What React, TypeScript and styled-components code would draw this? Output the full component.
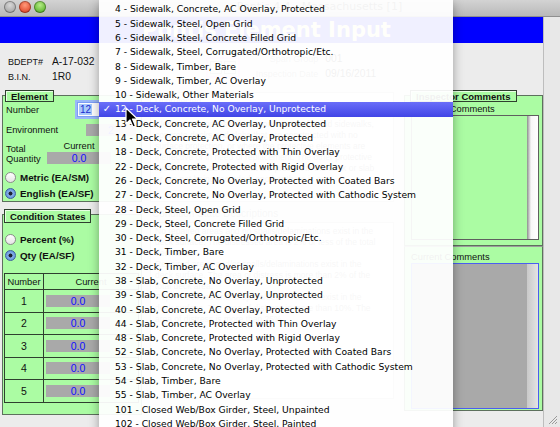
import { Fragment } from "react";
import styled, { createGlobalStyle } from "styled-components";

const GlobalStyle = createGlobalStyle`
  html, body {
    margin: 0;
    width: 560px;
    height: 427px;
    overflow: hidden;
    background: #ececec;
    font-family: "Liberation Sans", Arial, sans-serif;
  }
`;

const Window = styled.div`
  position: relative;
  width: 560px;
  height: 427px;
  overflow: hidden;
  display: flex;
  flex-direction: column;
  font-size: 9.3px;
  color: #111;
`;

const TitleBar = styled.div`
  height: 17px;
  flex: none;
  display: flex;
  align-items: flex-start;
  padding: 1px 0 0 4px;
  box-sizing: border-box;
  gap: 3px;
  background: linear-gradient(#d3d3d3, #b9b9b9);
  border-bottom: 1px solid #8f8f8f;
`;

const Light = styled.span<{ $c1: string; $c2: string }>`
  width: 12px;
  height: 12px;
  border-radius: 50%;
  background: radial-gradient(circle at 50% 35%, ${(p) => p.$c1}, ${(p) => p.$c2} 75%);
  box-shadow: inset 0 0 0 1px rgba(0, 0, 0, 0.3);
`;

const WinTitle = styled.div`
  flex: 1;
  text-align: center;
  font-family: "DejaVu Sans", sans-serif;
  font-size: 11px;
  color: #333;
  padding-left: 30px;
  line-height: 12px;
`;

const Body = styled.div`
  flex: 1;
  display: flex;
  min-height: 0;
`;

const Main = styled.div`
  width: 543px;
  display: flex;
  flex-direction: column;
`;

const Banner = styled.div`
  height: 26px;
  background: #0000ff;
  color: #ffffb8;
  font-family: "DejaVu Sans", sans-serif;
  font-size: 21px;
  font-weight: bold;
  display: flex;
  align-items: center;
  justify-content: center;
  padding-right: 10px;
`;

const InfoRow = styled.div`
  height: 46px;
  display: flex;
  align-items: flex-start;
`;

const InfoGrid = styled.div<{ $cols: string; $top: number; $left: number }>`
  display: grid;
  grid-template-columns: ${(p) => p.$cols};
  grid-auto-rows: 15px;
  column-gap: 7px;
  align-items: center;
  padding-top: ${(p) => p.$top}px;
  margin-left: ${(p) => p.$left}px;
  font-size: 9px;
`;

const InfoLabel = styled.span<{ $right?: boolean }>`
  text-align: ${(p) => (p.$right ? "right" : "left")};
  color: ${(p) => (p.$right ? "#777" : "#111")};
`;

const InfoValue = styled.span`
  font-size: 10.3px;
`;

const Toolbar = styled.div`
  margin: 14px 0 0 112px;
  width: 34px;
  height: 21px;
  border: 2px solid #f2a8f2;
  display: flex;
  gap: 2px;
  padding: 2px;
  box-sizing: border-box;
`;

const ToolIcon = styled.div`
  flex: 1;
  border: 1px solid #999;
  background: #eee;
`;

const Columns = styled.div`
  flex: 1;
  display: flex;
  padding: 0 0 16px 2px;
  gap: 4px;
  min-height: 0;
`;

const Column = styled.div<{ $w?: number }>`
  width: ${(p) => (p.$w ? `${p.$w}px` : "auto")};
  flex: ${(p) => (p.$w ? "none" : 1)};
  display: flex;
  flex-direction: column;
`;

const Panel = styled.div<{ $top: number; $grow?: boolean }>`
  margin-top: ${(p) => p.$top}px;
  background: #abfca3;
  border: 1px solid #5d705d;
  display: flex;
  flex-direction: column;
  flex: ${(p) => (p.$grow ? 1 : "none")};
`;

const Tab = styled.div<{ $h: number; $left: number }>`
  align-self: flex-start;
  margin: -6px 0 0 ${(p) => p.$left}px;
  height: ${(p) => p.$h}px;
  box-sizing: border-box;
  padding: 0 5px;
  background: #abfca3;
  border: 1px solid #2f3f2f;
  box-shadow: 1px 1px 0 #e8ffe4 inset;
  font-weight: bold;
  font-size: 9.5px;
  display: flex;
  align-items: center;
`;

const FieldRow = styled.div<{ $h: number; $mt?: number }>`
  height: ${(p) => p.$h}px;
  margin-top: ${(p) => p.$mt ?? 0}px;
  display: flex;
  align-items: center;
  padding-left: 3px;
`;

const FieldLabel = styled.span<{ $w: number }>`
  width: ${(p) => p.$w}px;
  flex: none;
`;

const NumberInput = styled.div`
  width: 46px;
  height: 13px;
  border: 1px solid #7d9df5;
  box-shadow: 0 0 0 2px #9ab8f8;
  background: #fff;
  display: flex;
  align-items: center;
  padding-left: 1px;
  font-size: 10px;
`;

const Selected = styled.span`
  background: #a9c8fb;
  color: #1a2cd0;
  padding: 0 1px;
`;

const GrayBox = styled.div<{ $w: number; $h: number }>`
  width: ${(p) => p.$w}px;
  height: ${(p) => p.$h}px;
  background: #a9a9a9;
  color: #1010ff;
  font-size: 10.5px;
  display: flex;
  align-items: center;
  justify-content: center;
`;

const QtyRow = styled.div`
  margin-top: 5px;
  display: grid;
  grid-template-columns: 41px 64px;
  padding-left: 3px;
`;

const QtyLabel = styled.div`
  padding-top: 3px;
  line-height: 10px;
`;

const QtyValue = styled.div`
  display: flex;
  flex-direction: column;
  align-items: center;
  gap: 1px;
  line-height: 10px;
`;

const RadioRow = styled.label<{ $mt?: number }>`
  height: 16px;
  margin-top: ${(p) => p.$mt ?? 0}px;
  display: flex;
  align-items: center;
  gap: 4px;
  padding-left: 2px;
  font-weight: bold;
  font-size: 9.8px;
`;

const Radio = styled.span<{ $on?: boolean }>`
  width: 11px;
  height: 11px;
  border-radius: 50%;
  box-sizing: border-box;
  border: 1px solid ${(p) => (p.$on ? "#3e5f9e" : "#8a8a8a")};
  background: ${(p) =>
    p.$on
      ? "radial-gradient(circle, #1b2233 0 1.7px, #86aee8 2.3px, #4f86d8 100%)"
      : "linear-gradient(#ffffff, #e4e4e4)"};
`;

const Table = styled.div`
  margin: 10px 2px 11px 1px;
  border: 1px solid #2f3f2f;
  display: grid;
  grid-template-columns: 39px 1fr;
`;

const Cell = styled.div<{ $h: number; $last?: boolean }>`
  height: ${(p) => p.$h}px;
  border-bottom: ${(p) => (p.$last ? "none" : "1px solid #2f3f2f")};
  display: flex;
  align-items: center;
  justify-content: center;
  font-size: 9.3px;
  &:nth-child(odd) {
    border-right: 1px solid #2f3f2f;
  }
`;

const RowNumber = styled(Cell)`
  font-size: 10.5px;
`;

const CurrentCell = styled(Cell)`
  justify-content: flex-start;
  padding-left: 2px;
`;

const CenterBox = styled.div<{ $h: number; $mt: number }>`
  margin: ${(p) => p.$mt}px 6px 0 4px;
  height: ${(p) => p.$h}px;
  border: 1px solid #bbb;
  background: #f8f8f8;
  font-size: 8.5px;
  color: #777;
  padding: 3px 12px 0 4px;
  line-height: 11px;
  overflow: hidden;
`;

const CenterLabel = styled.div`
  margin: 6px 0 0 6px;
  font-size: 10px;
  color: #777;
`;

const CommentLabel = styled.div`
  height: 13px;
  padding-left: 6px;
  display: flex;
  align-items: center;
  font-size: 9.3px;
`;

const CommentBox = styled.div<{ $h: number; $focus?: boolean }>`
  height: ${(p) => p.$h}px;
  margin: 0 3px 0 6px;
  box-sizing: border-box;
  border: 1px solid ${(p) => (p.$focus ? "#4a5ef0" : "#5f5f5f")};
  background: ${(p) =>
    p.$focus
      ? "linear-gradient(to right, #a9a9a9 0 calc(100% - 11px), #c9c9c9 calc(100% - 11px), #e4e4e4 100%)"
      : "linear-gradient(to right, #abfca3 0 calc(100% - 11px), #8e8e8e calc(100% - 11px), #f7f7f7 calc(100% - 7px), #ffffff 100%)"};
`;

const CurrentSection = styled.div`
  flex: 1;
  background: #abfca3;
  border: 1px solid #5d705d;
  border-top-color: #9c9c9c;
  display: flex;
  flex-direction: column;
  padding-top: 3px;
`;

const RightStrip = styled.div`
  flex: 1;
  background: #e8e8e8;
  border-left: 1px solid #bdbdbd;
  display: flex;
  align-items: flex-end;
  justify-content: flex-end;
  padding: 0 2px 2px 0;
`;

const Menu = styled.div`
  position: absolute;
  left: 99px;
  top: 0;
  width: 354px;
  height: 440px;
  padding-top: 2.35px;
  box-sizing: border-box;
  background: rgba(255, 255, 255, 0.94);
  box-shadow: 0 3px 10px rgba(0, 0, 0, 0.35);
  font-family: "DejaVu Sans", sans-serif;
  font-size: 9.2px;
`;

const MenuItem = styled.div<{ $active?: boolean }>`
  height: 14.3px;
  line-height: 14.3px;
  display: flex;
  white-space: nowrap;
  color: ${(p) => (p.$active ? "#fff" : "#000")};
  background: ${(p) => (p.$active ? "linear-gradient(#6a6ef9, #4145e6)" : "transparent")};
`;

const Check = styled.span`
  width: 16px;
  flex: none;
  text-align: center;
  font-size: 10px;
`;

const Cursor = styled.svg`
  position: absolute;
  left: 125px;
  top: 107px;
`;

const items = [
  "4 - Sidewalk, Concrete, AC Overlay, Protected",
  "5 - Sidewalk, Steel, Open Grid",
  "6 - Sidewalk, Steel, Concrete Filled Grid",
  "7 - Sidewalk, Steel, Corrugated/Orthotropic/Etc.",
  "8 - Sidewalk, Timber, Bare",
  "9 - Sidewalk, Timber, AC Overlay",
  "10 - Sidewalk, Other Materials",
  "12 - Deck, Concrete, No Overlay, Unprotected",
  "13 - Deck, Concrete, AC Overlay, Unprotected",
  "14 - Deck, Concrete, AC Overlay, Protected",
  "18 - Deck, Concrete, Protected with Thin  Overlay",
  "22 - Deck, Concrete, Protected with Rigid Overlay",
  "26 - Deck, Concrete, No Overlay, Protected with Coated Bars",
  "27 - Deck, Concrete, No Overlay, Protected with Cathodic System",
  "28 - Deck, Steel, Open Grid",
  "29 - Deck, Steel, Concrete Filled Grid",
  "30 - Deck, Steel, Corrugated/Orthotropic/Etc.",
  "31 - Deck, Timber, Bare",
  "32 - Deck, Timber, AC Overlay",
  "38 - Slab, Concrete, No Overlay, Unprotected",
  "39 - Slab, Concrete, AC Overlay, Unprotected",
  "40 - Slab, Concrete, AC Overlay, Protected",
  "44 - Slab, Concrete, Protected with Thin  Overlay",
  "48 - Slab, Concrete, Protected with Rigid Overlay",
  "52 - Slab, Concrete, No Overlay, Protected with Coated Bars",
  "53 - Slab, Concrete, No Overlay, Protected with Cathodic System",
  "54 - Slab, Timber, Bare",
  "55 - Slab, Timber, AC Overlay",
  "101 - Closed Web/Box Girder, Steel, Unpainted",
  "102 - Closed Web/Box Girder, Steel, Painted",
];

const App = () => {
  return (
    <Window>
      <GlobalStyle />
      <TitleBar>
        <Light $c1="#d8d8d8" $c2="#a4a4a4" />
        <Light $c1="#ff9a7a" $c2="#e0482a" />
        <Light $c1="#b6ec86" $c2="#5bb22c" />
        <WinTitle>Pontis 4.4 - Massachusetts [1]</WinTitle>
      </TitleBar>
      <Body>
        <Main>
          <Banner>Pontis Element Input</Banner>
          <InfoRow>
            <InfoGrid $cols="37px auto" $top={11} $left={8}>
              <InfoLabel>BDEPT#</InfoLabel>
              <InfoValue>A-17-032</InfoValue>
              <InfoLabel>B.I.N.</InfoLabel>
              <InfoValue>1R0</InfoValue>
            </InfoGrid>
            <Toolbar>
              <ToolIcon />
              <ToolIcon />
            </Toolbar>
            <InfoGrid $cols="70px 86px" $top={8} $left={8}>
              <InfoLabel $right>Span Group</InfoLabel>
              <InfoValue>001</InfoValue>
              <InfoLabel $right>Inspection Date</InfoLabel>
              <InfoValue>09/16/2011</InfoValue>
            </InfoGrid>
          </InfoRow>
          <Columns>
            <Column $w={140}>
              <Panel $top={6}>
                <Tab $h={12} $left={2}>Element</Tab>
                <FieldRow $h={15}>
                  <FieldLabel $w={71}>Number</FieldLabel>
                  <NumberInput>
                    <Selected>12</Selected>
                  </NumberInput>
                </FieldRow>
                <FieldRow $h={13} $mt={6}>
                  <FieldLabel $w={80}>Environment</FieldLabel>
                  <GrayBox $w={50} $h={12}>2</GrayBox>
                </FieldRow>
                <QtyRow>
                  <QtyLabel>
                    Total
                    <br />
                    Quantity
                  </QtyLabel>
                  <QtyValue>
                    <span>Current</span>
                    <GrayBox $w={64} $h={12}>0.0</GrayBox>
                  </QtyValue>
                </QtyRow>
                <RadioRow $mt={5}>
                  <Radio />
                  Metric (EA/SM)
                </RadioRow>
                <RadioRow>
                  <Radio $on />
                  English (EA/SF)
                </RadioRow>
              </Panel>
              <Panel $top={12} $grow>
                <Tab $h={14} $left={1}>Condition States</Tab>
                <RadioRow $mt={8}>
                  <Radio />
                  Percent (%)
                </RadioRow>
                <RadioRow>
                  <Radio $on />
                  Qty (EA/SF)
                </RadioRow>
                <Table>
                  <Cell $h={15}>Number</Cell>
                  <Cell $h={15}>Current</Cell>
                  {[1, 2, 3, 4, 5].map((n) => (
                    <Fragment key={n}>
                      <RowNumber $h={21.5} $last={n === 5}>
                        {n}
                      </RowNumber>
                      <CurrentCell $h={21.5} $last={n === 5}>
                        <GrayBox $w={64} $h={12}>0.0</GrayBox>
                      </CurrentCell>
                    </Fragment>
                  ))}
                </Table>
              </Panel>
            </Column>
            <Column>
              <CenterBox $h={12} $mt={3}>Unprotected</CenterBox>
              <CenterBox $h={82} $mt={6}>
                Element 12 applies to bare concrete decks and sidewalks, concrete
                decks and slabs that are constructed with no surface protection,
                or where the protective elements are ineffective or in need of
                replacement. The other protective systems such as those that are
                present in the deck or slab or are not being recorded, another
                there is an
              </CenterBox>
              <CenterLabel>Condition State Descriptions</CenterLabel>
              <CenterBox $h={172} $mt={3}>
                No repaired areas and no spalls/delaminations exist in the deck
                surface. The distressed area is 2% or less of the total deck area.
                <br />
                Repaired areas and/or spalls/delaminations exist in the deck
                surface. The area of distress is more than 2% of the total deck
                area.
                <br />
                Repaired areas and/or spalls/delaminations exist in the deck
                surface. The area of distress is more than 10%. The area of
                distress is more than 25%.
              </CenterBox>
            </Column>
            <Column $w={139}>
              <Panel $top={6}>
                <Tab $h={12} $left={5}>Inspector Comments</Tab>
                <CommentLabel>Previous Comments</CommentLabel>
                <CommentBox $h={125} />
                <div style={{ height: 5 }} />
              </Panel>
              <CurrentSection>
                <CommentLabel>Current Comments</CommentLabel>
                <CommentBox $h={146} $focus />
              </CurrentSection>
            </Column>
          </Columns>
        </Main>
        <RightStrip>
          <svg width="11" height="11" viewBox="0 0 11 11">
            <path d="M10 2 L2 10 M10 5 L5 10 M10 8 L8 10" stroke="#9a9a9a" strokeWidth="1" />
          </svg>
        </RightStrip>
      </Body>
      <Menu>
        {items.map((it) => (
          <MenuItem key={it} $active={it.startsWith("12 ")}>
            <Check>{it.startsWith("12 ") ? "✓" : ""}</Check>
            {it}
          </MenuItem>
        ))}
      </Menu>
      <Cursor width="14" height="22" viewBox="0 0 14 22">
        <path d="M1 1 L1 17 L5 13 L8 20 L10.5 19 L7.5 12 L12.5 12 Z" fill="#000" stroke="#fff" strokeWidth="1.2" strokeLinejoin="round" />
      </Cursor>
    </Window>
  );
};

export default App;
